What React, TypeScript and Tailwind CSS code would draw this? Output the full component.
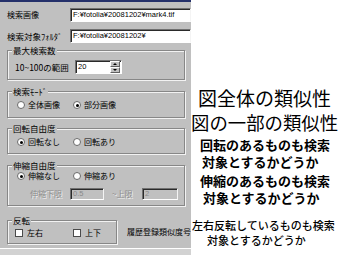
const jp = "font-['Noto_Sans_CJK_JP',sans-serif]";
const mono = "font-['Liberation_Sans',sans-serif]";

function Field({ width, text, disabled }: { width: string; text: string; disabled?: boolean }) {
  return (
    <div
      className={`${width} h-[14px] flex items-center pl-[2px] border border-t-[#707070] border-l-[#707070] border-b-white border-r-[#f4f4f4] shadow-[inset_1px_1px_0_#2a2a2a] ${
        disabled ? "bg-[#c0c0c0] text-[#8a8a8a]" : "bg-white text-black"
      } ${mono} text-[7.5px] leading-none whitespace-nowrap overflow-hidden`}
    >
      {text}
    </div>
  );
}

function Group({ label, className, children }: { label: string; className?: string; children: React.ReactNode }) {
  return (
    <div className={`border border-[#878787] shadow-[1px_1px_0_#f2f2f2,inset_1px_1px_0_#f2f2f2] ${className ?? ""}`}>
      <div className="-mt-[6px] ml-[4px] w-fit px-[1px] bg-[#c0c0c0] leading-[10px]">{label}</div>
      {children}
    </div>
  );
}

function Radio({ label, checked, width }: { label: string; checked?: boolean; width?: string }) {
  return (
    <div className={`flex items-center gap-[3px] text-[8px] ${width ?? ""}`}>
      <span className="w-[8px] h-[8px] rounded-full bg-white border border-[#6a6a6a] flex items-center justify-center">
        {checked && <span className="w-[3px] h-[3px] rounded-full bg-black" />}
      </span>
      <span>{label}</span>
    </div>
  );
}

function Check({ label, width }: { label: string; width?: string }) {
  return (
    <div className={`flex items-center gap-[4px] text-[8px] ${width ?? ""}`}>
      <span className="w-[8px] h-[8px] bg-white border border-[#4a4a4a]" />
      <span>{label}</span>
    </div>
  );
}

export default function App() {
  return (
    <div className="w-[340px] h-[255px] flex bg-white overflow-hidden">
      {/* dialog */}
      <div className={`w-[191px] h-full flex flex-col bg-[#c0c0c0] text-black ${jp} text-[8.5px] overflow-hidden`}>
        <div className="h-[2px] bg-[#24306a]" />

        <div className="mt-[6px] flex items-center">
          <div className="w-[70px] pl-[7px] leading-none text-[8px]">検索画像</div>
          <Field width="w-[121px]" text="F:¥fotolia¥20081202¥mark4.tif" />
        </div>
        <div className="mt-[7px] flex items-center">
          <div className="w-[70px] pl-[7px] leading-none whitespace-nowrap">検索対象ﾌｫﾙﾀﾞ</div>
          <Field width="w-[121px]" text="F:¥fotolia¥20081202¥" />
        </div>

        <Group label="最大検索数" className="mt-[7px] mx-[7px] w-[178px] pb-[5px]">
          <div className="mt-[5px] h-[14px] flex items-center">
            <div className="w-[67px] pl-[7px] leading-none whitespace-nowrap">10~100の範囲</div>
            <div className="w-[47px] h-[14px] flex items-center border border-t-[#707070] border-l-[#707070] border-b-white border-r-white shadow-[inset_1px_1px_0_#2a2a2a] bg-white">
              <span className={`flex-1 pl-[2px] ${mono} text-[7.5px] leading-none`}>20</span>
              <div className="flex flex-col pr-[1px]">
                <div className="w-[10px] h-[6px] bg-[#c0c0c0] border border-t-white border-l-white border-b-[#606060] border-r-[#606060] flex items-center justify-center">
                  <span className="w-0 h-0 border-l-[2px] border-r-[2px] border-b-[2px] border-l-transparent border-r-transparent border-b-black" />
                </div>
                <div className="w-[10px] h-[6px] bg-[#c0c0c0] border border-t-white border-l-white border-b-[#606060] border-r-[#606060] flex items-center justify-center">
                  <span className="w-0 h-0 border-l-[2px] border-r-[2px] border-t-[2px] border-l-transparent border-r-transparent border-t-black" />
                </div>
              </div>
            </div>
          </div>
        </Group>

        <Group label="検索ﾓｰﾄﾞ" className="mt-[11px] mx-[7px] w-[178px] pb-[6px]">
          <div className="mt-[3px] h-[12px] flex items-center pl-[9px]">
            <Radio label="全体画像" width="w-[56px]" />
            <Radio label="部分画像" checked />
          </div>
        </Group>

        <Group label="回転自由度" className="mt-[10px] mx-[7px] w-[178px] pb-[5px]">
          <div className="mt-[3px] h-[12px] flex items-center pl-[9px]">
            <Radio label="回転なし" checked width="w-[56px]" />
            <Radio label="回転あり" />
          </div>
        </Group>

        <Group label="伸縮自由度" className="mt-[11px] mx-[7px] w-[178px] pb-[6px]">
          <div className="h-[12px] flex items-center pl-[9px]">
            <Radio label="伸縮なし" checked width="w-[56px]" />
            <Radio label="伸縮あり" />
          </div>
          <div className="mt-[6px] h-[11px] flex items-center">
            <div className="w-[62px] pl-[22px] text-[8px] text-[#8a8a8a] [text-shadow:1px_1px_0_#f2f2f2] whitespace-nowrap leading-none">伸縮下限</div>
            <Field width="w-[34px] !h-[12px]" text="0.5" disabled />
            <div className="w-[38px] pl-[8px] text-[8px] text-[#8a8a8a] [text-shadow:1px_1px_0_#f2f2f2] whitespace-nowrap leading-none">~上限</div>
            <Field width="w-[36px] !h-[12px]" text="2" disabled />
          </div>
        </Group>

        <div className="mt-[14px] flex items-start">
          <Group label="反転" className="ml-[7px] w-[111px] pb-[4px]">
            <div className="mt-[2px] h-[12px] flex items-center pl-[7px]">
              <Check label="左右" width="w-[58px]" />
              <Check label="上下" />
            </div>
          </Group>
          <div className="ml-[10px] mt-[8px] text-[8px] whitespace-nowrap leading-none">履歴登録類似度号</div>
        </div>

        <div className="mt-auto h-[7px] bg-[#d2d2d2] border-t border-white" />
      </div>

      {/* explanation */}
      <div className={`flex-1 flex flex-col pt-[88px] text-black ${jp} whitespace-nowrap`}>
        <div className="pl-[7px] text-[19px] leading-[20px]">図全体の類似性</div>
        <div className="mt-[4px] text-[18.4px] leading-[20px]">図の一部の類似性</div>
        <div className="mt-[6px] pl-[9px] text-[13px] leading-[14px] font-bold">回転のあるものも検索</div>
        <div className="mt-[3px] pl-[11px] text-[13px] leading-[14px] font-bold">対象とするかどうか</div>
        <div className="mt-[5px] pl-[9px] text-[13px] leading-[14px] font-bold">伸縮のあるものも検索</div>
        <div className="mt-[3px] pl-[12px] text-[13px] leading-[14px] font-bold">対象とするかどうか</div>
        <div className="mt-[14px] pl-[1px] text-[11px] leading-[12px] font-medium">左右反転しているものも検索</div>
        <div className="mt-[3px] pl-[16px] text-[11px] leading-[12px] font-medium">対象とするかどうか</div>
      </div>
    </div>
  );
}
